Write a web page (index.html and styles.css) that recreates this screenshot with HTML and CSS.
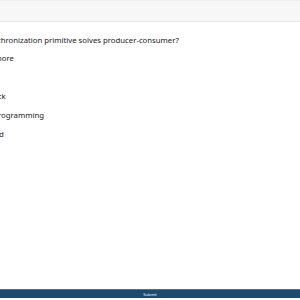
FILE: index.html
```html
<!DOCTYPE html>
<html lang="en">
  <head>
    <meta charset="UTF-8" />
    <meta name="viewport" content="width=device-width, initial-scale=1.0" />
    <title>Quiz</title>
    <link rel="stylesheet" href="styles.css">
  </head>
  <body>
    <!-- thanh tiêu đề -->
    <div class="topbar"></div>

    <!-- câu hỏi -->
    <div class="quiz">
      <p class="question">Which synchronization primitive solves producer-consumer?</p>
      <ul class="options">
        <li><span class="radio"></span>Semaphore</li>
        <li><span class="radio"></span>Stack</li>
        <li><span class="radio"></span>Deadlock</li>
        <li><span class="radio"></span>Logic programming</li>
        <li><span class="radio"></span>Guarded</li>
      </ul>
    </div>

    <div class="footer">
      <span>Submit</span>
    </div>
  </body>
</html>
```

FILE: styles.css
```css
html,
body {
  height: 100%;
}
body {
  margin: 0;
  display: flex;
  flex-direction: column;
  font-family: "Noto Sans", "Open Sans", sans-serif;
  color: #222;
  background: #fff;
  overflow: hidden;
}
.topbar {
  height: 20px;
  background: #f7f7f7;
  border-top: 1px solid #efefef;
  border-bottom: 1px solid #e6e6e6;
}
.quiz {
  margin-left: -40px;
  padding-top: 11px;
  font-size: 7.75px;
}
.question {
  margin: 0;
  line-height: 14px;
}
.options {
  list-style: none;
  margin: 1px 0 0 -2px;
  padding: 0;
}
.options li {
  display: flex;
  align-items: center;
  gap: 4px;
  height: 19px;
}
.radio {
  width: 8px;
  height: 8px;
  border: 1px solid #999;
  border-radius: 50%;
}
.footer {
  margin-top: auto;
  margin-bottom: 2px;
  height: 8px;
  background: #1d4a70;
  border-top: 1px solid #4a7396;
  display: flex;
  align-items: center;
  justify-content: center;
  color: #fff;
  font-size: 4px;
}
```
